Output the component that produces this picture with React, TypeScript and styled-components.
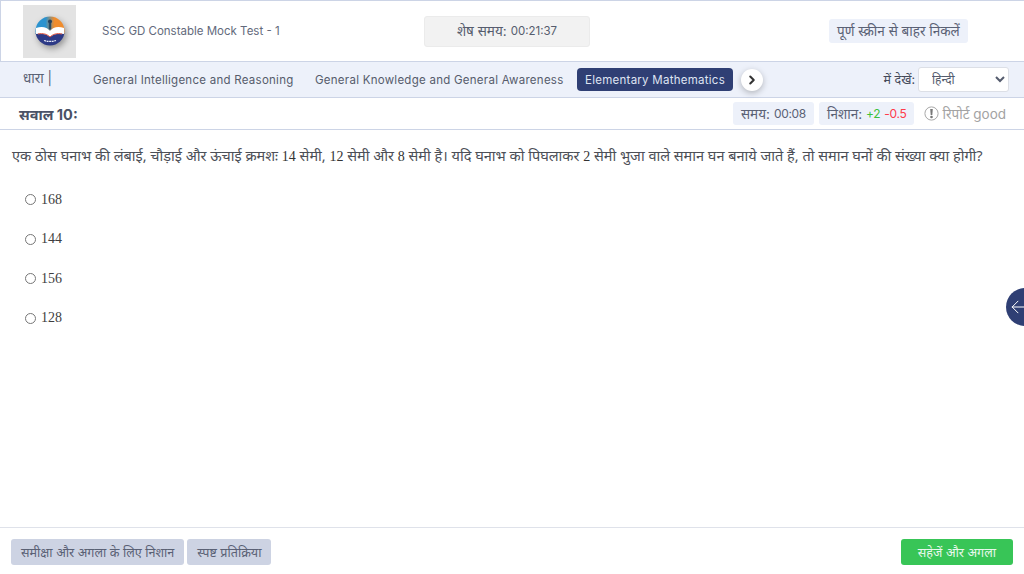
import React, { FC } from "react";
import styled, { createGlobalStyle } from "styled-components";
import { ChevronRight, ArrowLeft } from "lucide-react";

const sans = `Inter, "Noto Sans", "Noto Sans Devanagari", sans-serif`;
const lineColor = "#ccd4e6";
const navy = "#2f3f74";

const GlobalStyle = createGlobalStyle`
  html, body { margin: 0; padding: 0; background: #fff; }
  body { font-family: ${sans}; color: #555c6e; overflow: hidden; }
  * { box-sizing: border-box; }
`;

const Page = styled.div`
  width: 1024px;
  height: 574px;
  display: flex;
  flex-direction: column;
  position: relative;
  overflow: hidden;
`;

// Hindi words sit bigger than the latin digits next to them
const Deva = styled.span`
  font-size: 13.5px;
  letter-spacing: 0;
`;

const TopBar = styled.header`
  height: 61px;
  display: grid;
  grid-template-columns: 79px 322px 166px 239px 1fr;
  align-items: center;
  border-top: 1px solid ${lineColor};
  border-left: 1px solid ${lineColor};
  padding-left: 22px;
`;

const LogoBox = styled.div`
  width: 53px;
  height: 53px;
  background: #e3e3e3;
  display: flex;
  align-items: center;
  justify-content: center;

  svg {
    filter: drop-shadow(2px 3px 3px rgba(0, 0, 0, 0.35));
  }
`;

const TestName = styled.div`
  font-size: 11.5px;
  color: #636a7c;
`;

const Timer = styled.div`
  height: 31px;
  width: 166px;
  background: #f2f2f2;
  border: 1px solid #ebebeb;
  border-radius: 3px;
  font-size: 11.5px;
  color: #565d6e;
  display: flex;
  align-items: center;
  justify-content: center;
  gap: 4px;
`;

const ExitButton = styled.div`
  justify-self: start;
  grid-column: 5;
  height: 24px;
  padding: 0 8px;
  background: #edf1fa;
  border-radius: 3px;
  font-size: 13.5px;
  color: #5a6175;
  display: flex;
  align-items: center;
  white-space: nowrap;
`;

const SectionBar = styled.nav`
  height: 37px;
  background: #edf1fa;
  border-top: 1px solid ${lineColor};
  border-bottom: 1px solid ${lineColor};
  display: flex;
  align-items: center;
  padding-left: 23px;
  position: relative;
`;

const SectionLabel = styled.div`
  font-size: 13.5px;
  color: #5a6175;
  width: 62px;
  margin-top: -3px;
`;

const Tab = styled.div<{ $active?: boolean }>`
  height: 23px;
  padding: 0 8px;
  margin-right: 5.5px;
  display: flex;
  align-items: center;
  border-radius: 4px;
  font-size: 11.5px;
  letter-spacing: 0.26px;
  white-space: nowrap;
  background: ${p => (p.$active ? navy : "transparent")};
  color: ${p => (p.$active ? "#dfe4f2" : "#565c6c")};
`;

const NextTab = styled.div`
  width: 22px;
  height: 22px;
  margin-left: 2px;
  border-radius: 50%;
  background: #fff;
  box-shadow: 0 2px 6px rgba(0, 0, 0, 0.25);
  display: flex;
  align-items: center;
  justify-content: center;
  color: #333;
`;

const LangGroup = styled.div`
  margin-left: auto;
  margin-right: 15px;
  display: flex;
  align-items: center;
  gap: 3px;
  font-size: 12.5px;
  color: #444a5a;
`;

const LangSelect = styled.select`
  width: 91px;
  height: 25px;
  background: #fff;
  border: 1px solid #dcdfe6;
  border-radius: 3px;
  padding-left: 9px;
  font-family: ${sans};
  font-size: 12px;
  color: #555c6e;
`;

const QuestionHead = styled.div`
  height: 32px;
  border-bottom: 1px solid ${lineColor};
  display: flex;
  align-items: center;
  padding: 0 18px 0 19px;
`;

const QuestionNo = styled.div`
  font-size: 14.5px;
  font-weight: 700;
  color: #4a5166;
  margin-right: auto;
`;

const InfoChip = styled.div`
  height: 23px;
  padding: 0 8px;
  margin-right: 5px;
  background: #edf1fa;
  border-radius: 3px;
  display: flex;
  align-items: center;
  gap: 4px;
  font-size: 12px;
  letter-spacing: -0.3px;
  color: #5a6175;
`;

const Mark = styled.span<{ $tone: "good" | "bad" }>`
  color: ${p => (p.$tone === "good" ? "#3cc13b" : "#ff3b4a")};
`;

const Report = styled.div`
  display: flex;
  align-items: center;
  gap: 3px;
  margin-left: 5px;
  font-size: 13.5px;
  color: #a3a3a3;
`;

const Body = styled.main`
  flex: 1;
  padding: 16px 12px 0;
`;

const QuestionText = styled.p`
  margin: 0 0 14px;
  font-family: "Noto Sans", "Noto Sans Devanagari", sans-serif;
  font-size: 14.5px;
  line-height: 18px;
  color: #4c4f57;
  white-space: nowrap;

  b {
    font-family: "Liberation Serif", serif;
    font-weight: 400;
    font-size: 14px;
    color: #333;
  }
`;

const OptionRow = styled.label`
  height: 39.5px;
  display: flex;
  align-items: center;
  padding: 0 0 0 13px;
  gap: 5px;
  font-family: "Liberation Serif", serif;
  font-size: 14px;
  color: #3f3f3f;

  input {
    margin: 0;
    width: 11px;
    height: 11px;
  }
`;

const SidePull = styled.div`
  position: absolute;
  right: -20px;
  top: 288px;
  width: 38px;
  height: 38px;
  border-radius: 50%;
  background: ${navy};
  color: #fff;
  display: flex;
  align-items: center;
  padding-left: 2px;
`;

const Footer = styled.footer`
  height: 47px;
  border-top: 1px solid #dfe2ea;
  display: flex;
  align-items: flex-start;
  padding: 11px 11px 0;
  gap: 3px;
`;

const FooterButton = styled.div<{ $primary?: boolean }>`
  height: 26px;
  padding: 0 ${p => (p.$primary ? "17px" : "10px")};
  margin-left: ${p => (p.$primary ? "auto" : "0")};
  border-radius: 3px;
  display: flex;
  align-items: center;
  font-size: 12.6px;
  white-space: nowrap;
  background: ${p => (p.$primary ? "#38c557" : "#cdd3e3")};
  color: ${p => (p.$primary ? "#e9f8ec" : "#5a6175")};
`;

const Logo: FC = () => (
  <svg width="30" height="30" viewBox="0 0 30 30">
    <defs>
      <clipPath id="disc">
        <circle cx="15" cy="15" r="14.5" />
      </clipPath>
      <linearGradient id="sky" x1="0" y1="0" x2="1" y2="0">
        <stop offset="0.35" stopColor="#2b93cf" />
        <stop offset="0.65" stopColor="#f08c2c" />
      </linearGradient>
    </defs>
    <g clipPath="url(#disc)">
      <rect width="30" height="18" fill="url(#sky)" />
      <rect y="17" width="30" height="13" fill="#2d3a86" />
      <path d="M1 12c6-2 11-1 14 3 3-4 8-5 14-3v6c-6-1-11 0-14 3-3-3-8-4-14-3z" fill="#fff" />
      <path d="M3 18c5-1 9 0 12 3 3-3 7-4 12-3" fill="none" stroke="#e0533c" strokeWidth="1" />
      <circle cx="15" cy="5.5" r="2" fill="#24405c" />
      <rect x="13.8" y="7" width="2.4" height="6.5" fill="#2c4b63" />
      <path d="M9 24.5q6 1.8 12 0" fill="none" stroke="#e8ebf7" strokeWidth="1.3" strokeDasharray="2 .6" />
    </g>
  </svg>
);

const App: FC = () => (
  <Page>
    <GlobalStyle />
    <TopBar>
      <LogoBox>
        <Logo />
      </LogoBox>
      <TestName>SSC GD Constable Mock Test - 1</TestName>
      <Timer>
        <Deva>शेष समय:</Deva> 00:21:37
      </Timer>
      <ExitButton>पूर्ण स्क्रीन से बाहर निकलें</ExitButton>
    </TopBar>
    <SectionBar>
      <SectionLabel>धारा |</SectionLabel>
      <Tab>General Intelligence and Reasoning</Tab>
      <Tab>General Knowledge and General Awareness</Tab>
      <Tab $active>Elementary Mathematics</Tab>
      <NextTab>
        <ChevronRight size={14} strokeWidth={3.5} />
      </NextTab>
      <LangGroup>
        <span>में देखें:</span>
        <LangSelect defaultValue="hi">
          <option value="hi">हिन्दी</option>
        </LangSelect>
      </LangGroup>
    </SectionBar>
    <QuestionHead>
      <QuestionNo>सवाल 10:</QuestionNo>
      <InfoChip>
        <Deva>समय:</Deva> 00:08
      </InfoChip>
      <InfoChip>
        <Deva>निशान:</Deva> <Mark $tone="good">+2</Mark> <Mark $tone="bad">-0.5</Mark>
      </InfoChip>
      <Report>
        <svg width="15" height="15" viewBox="0 0 15 15">
          <circle cx="7.5" cy="7.5" r="6.6" fill="none" stroke="#a8a8a8" />
          <path d="M6.2 3h2.6l-.5 6H6.7z" fill="#777" />
          <circle cx="7.5" cy="11" r="1.3" fill="#777" />
        </svg>
        रिपोर्ट good
      </Report>
    </QuestionHead>
    <Body>
      <QuestionText>
        एक ठोस घनाभ की लंबाई, चौड़ाई और ऊंचाई क्रमशः <b>14</b> सेमी, <b>12</b> सेमी और <b>8</b> सेमी है। यदि घनाभ को
        पिघलाकर <b>2</b> सेमी भुजा वाले समान घन बनाये जाते हैं, तो समान घनों की संख्या क्या होगी?
      </QuestionText>
      {["168", "144", "156", "128"].map(value => (
        <OptionRow key={value}>
          <input type="radio" name="answer" />
          {value}
        </OptionRow>
      ))}
    </Body>
    <SidePull>
      <ArrowLeft size={20} strokeWidth={1.2} />
    </SidePull>
    <Footer>
      <FooterButton>समीक्षा और अगला के लिए निशान</FooterButton>
      <FooterButton>स्पष्ट प्रतिक्रिया</FooterButton>
      <FooterButton $primary>सहेजें और अगला</FooterButton>
    </Footer>
  </Page>
);

export default App;
